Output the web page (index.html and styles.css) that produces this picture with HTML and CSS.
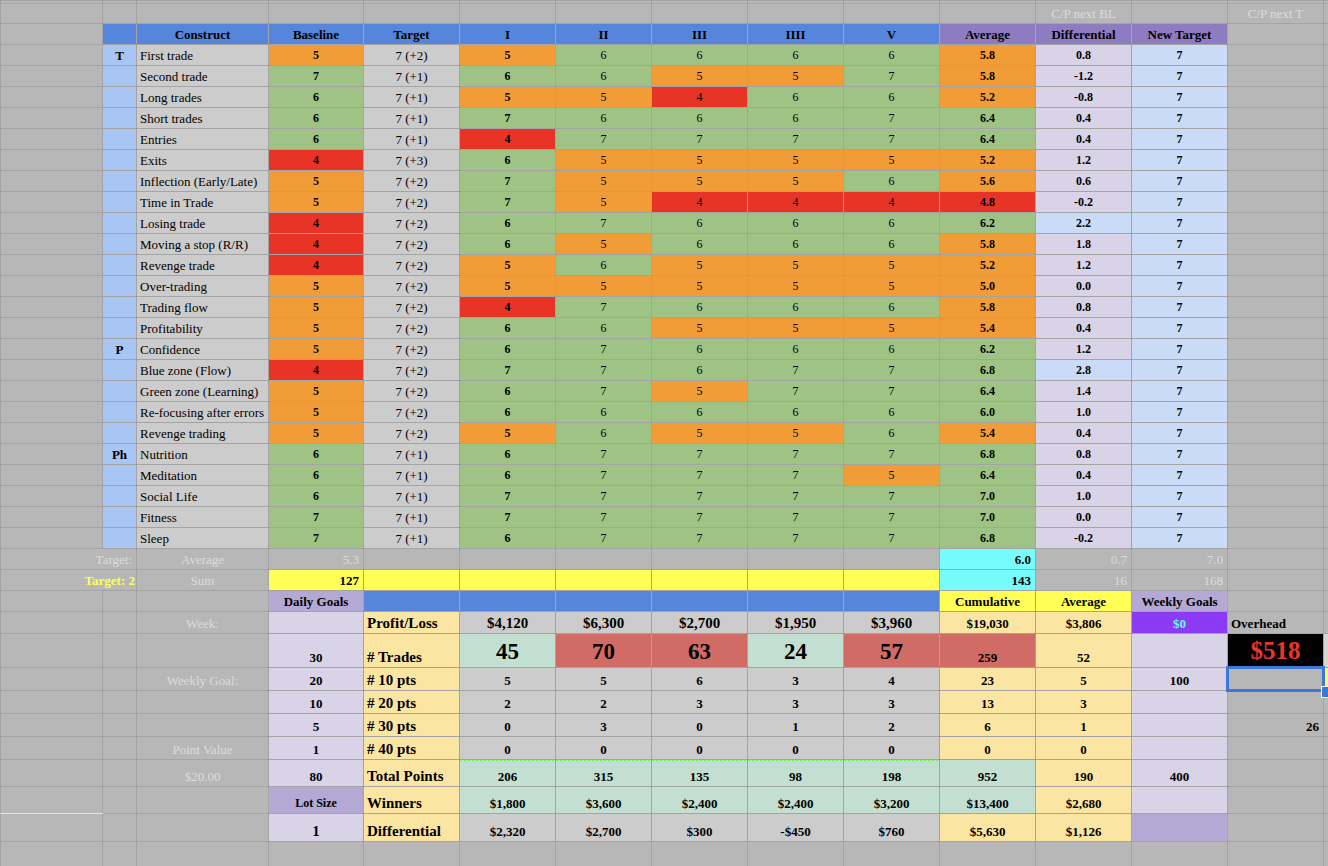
FILE: index.html
```html
<!DOCTYPE html>
<html>
<head>
<meta charset="utf-8">
<title>Trading Sheet</title>
<link rel="stylesheet" href="styles.css">
</head>
<body>
<table class="sheet">
<colgroup>
<col class="ca"><col class="cb"><col class="cc"><col class="cd">
<col class="cn"><col class="cn"><col class="cn"><col class="cn"><col class="cn">
<col class="cn"><col class="cn"><col class="cn"><col class="cn"><col class="cn">
<col class="co">
</colgroup>
<tbody>
<tr class="h23 top"><td></td><td></td><td></td><td></td><td></td><td></td><td></td><td></td><td></td><td></td><td></td><td class="dim">C/P next BL</td><td></td><td class="dim">C/P next T</td><td></td></tr>
<tr class="h21 hd"><td></td><td class="bl"></td><td class="bl b">Construct</td><td class="bl b">Baseline</td><td class="bl b">Target</td><td class="bl b">I</td><td class="bl b">II</td><td class="bl b">III</td><td class="bl b">IIII</td><td class="bl b">V</td><td class="pu b">Average</td><td class="pu b">Differential</td><td class="pu b">New Target</td><td></td><td></td></tr>

<tr class="h21"><td></td><td class="lb tag">T</td><td class="lg nm">First trade</td><td class="or b">5</td><td class="lg tg">7 (+2)</td><td class="or b">5</td><td class="gr">6</td><td class="gr">6</td><td class="gr">6</td><td class="gr">6</td><td class="or b">5.8</td><td class="lv b">0.8</td><td class="nt b">7</td><td></td><td></td></tr>
<tr class="h21"><td></td><td class="lb"></td><td class="lg nm">Second trade</td><td class="gr b">7</td><td class="lg tg">7 (+1)</td><td class="gr b">6</td><td class="gr">6</td><td class="or">5</td><td class="or">5</td><td class="gr">7</td><td class="or b">5.8</td><td class="lv b">-1.2</td><td class="nt b">7</td><td></td><td></td></tr>
<tr class="h21"><td></td><td class="lb"></td><td class="lg nm">Long trades</td><td class="gr b">6</td><td class="lg tg">7 (+1)</td><td class="or b">5</td><td class="or">5</td><td class="rd">4</td><td class="gr">6</td><td class="gr">6</td><td class="or b">5.2</td><td class="lv b">-0.8</td><td class="nt b">7</td><td></td><td></td></tr>
<tr class="h21"><td></td><td class="lb"></td><td class="lg nm">Short trades</td><td class="gr b">6</td><td class="lg tg">7 (+1)</td><td class="gr b">7</td><td class="gr">6</td><td class="gr">6</td><td class="gr">6</td><td class="gr">7</td><td class="gr b">6.4</td><td class="lv b">0.4</td><td class="nt b">7</td><td></td><td></td></tr>
<tr class="h21"><td></td><td class="lb"></td><td class="lg nm">Entries</td><td class="gr b">6</td><td class="lg tg">7 (+1)</td><td class="rd b">4</td><td class="gr">7</td><td class="gr">7</td><td class="gr">7</td><td class="gr">7</td><td class="gr b">6.4</td><td class="lv b">0.4</td><td class="nt b">7</td><td></td><td></td></tr>
<tr class="h21"><td></td><td class="lb"></td><td class="lg nm">Exits</td><td class="rd b">4</td><td class="lg tg">7 (+3)</td><td class="gr b">6</td><td class="or">5</td><td class="or">5</td><td class="or">5</td><td class="or">5</td><td class="or b">5.2</td><td class="lv b">1.2</td><td class="nt b">7</td><td></td><td></td></tr>
<tr class="h21"><td></td><td class="lb"></td><td class="lg nm">Inflection (Early/Late)</td><td class="or b">5</td><td class="lg tg">7 (+2)</td><td class="gr b">7</td><td class="or">5</td><td class="or">5</td><td class="or">5</td><td class="gr">6</td><td class="or b">5.6</td><td class="lv b">0.6</td><td class="nt b">7</td><td></td><td></td></tr>
<tr class="h21"><td></td><td class="lb"></td><td class="lg nm">Time in Trade</td><td class="or b">5</td><td class="lg tg">7 (+2)</td><td class="gr b">7</td><td class="or">5</td><td class="rd">4</td><td class="rd">4</td><td class="rd">4</td><td class="rd b">4.8</td><td class="lv b">-0.2</td><td class="nt b">7</td><td></td><td></td></tr>
<tr class="h21"><td></td><td class="lb"></td><td class="lg nm">Losing trade</td><td class="rd b">4</td><td class="lg tg">7 (+2)</td><td class="gr b">6</td><td class="gr">7</td><td class="gr">6</td><td class="gr">6</td><td class="gr">6</td><td class="gr b">6.2</td><td class="nt b">2.2</td><td class="nt b">7</td><td></td><td></td></tr>
<tr class="h21"><td></td><td class="lb"></td><td class="lg nm">Moving a stop (R/R)</td><td class="rd b">4</td><td class="lg tg">7 (+2)</td><td class="gr b">6</td><td class="or">5</td><td class="gr">6</td><td class="gr">6</td><td class="gr">6</td><td class="or b">5.8</td><td class="lv b">1.8</td><td class="nt b">7</td><td></td><td></td></tr>
<tr class="h21"><td></td><td class="lb"></td><td class="lg nm">Revenge trade</td><td class="rd b">4</td><td class="lg tg">7 (+2)</td><td class="or b">5</td><td class="gr">6</td><td class="or">5</td><td class="or">5</td><td class="or">5</td><td class="or b">5.2</td><td class="lv b">1.2</td><td class="nt b">7</td><td></td><td></td></tr>
<tr class="h21"><td></td><td class="lb"></td><td class="lg nm">Over-trading</td><td class="or b">5</td><td class="lg tg">7 (+2)</td><td class="or b">5</td><td class="or">5</td><td class="or">5</td><td class="or">5</td><td class="or">5</td><td class="or b">5.0</td><td class="lv b">0.0</td><td class="nt b">7</td><td></td><td></td></tr>
<tr class="h21"><td></td><td class="lb"></td><td class="lg nm">Trading flow</td><td class="or b">5</td><td class="lg tg">7 (+2)</td><td class="rd b">4</td><td class="gr">7</td><td class="gr">6</td><td class="gr">6</td><td class="gr">6</td><td class="or b">5.8</td><td class="lv b">0.8</td><td class="nt b">7</td><td></td><td></td></tr>
<tr class="h21"><td></td><td class="lb"></td><td class="lg nm">Profitability</td><td class="or b">5</td><td class="lg tg">7 (+2)</td><td class="gr b">6</td><td class="gr">6</td><td class="or">5</td><td class="or">5</td><td class="or">5</td><td class="or b">5.4</td><td class="lv b">0.4</td><td class="nt b">7</td><td></td><td></td></tr>
<tr class="h21"><td></td><td class="lb tag">P</td><td class="lg nm">Confidence</td><td class="or b">5</td><td class="lg tg">7 (+2)</td><td class="gr b">6</td><td class="gr">7</td><td class="gr">6</td><td class="gr">6</td><td class="gr">6</td><td class="gr b">6.2</td><td class="lv b">1.2</td><td class="nt b">7</td><td></td><td></td></tr>
<tr class="h21"><td></td><td class="lb"></td><td class="lg nm">Blue zone (Flow)</td><td class="rd b">4</td><td class="lg tg">7 (+2)</td><td class="gr b">7</td><td class="gr">7</td><td class="gr">6</td><td class="gr">7</td><td class="gr">7</td><td class="gr b">6.8</td><td class="nt b">2.8</td><td class="nt b">7</td><td></td><td></td></tr>
<tr class="h21"><td></td><td class="lb"></td><td class="lg nm">Green zone (Learning)</td><td class="or b">5</td><td class="lg tg">7 (+2)</td><td class="gr b">6</td><td class="gr">7</td><td class="or">5</td><td class="gr">7</td><td class="gr">7</td><td class="gr b">6.4</td><td class="lv b">1.4</td><td class="nt b">7</td><td></td><td></td></tr>
<tr class="h21"><td></td><td class="lb"></td><td class="lg nm">Re-focusing after errors</td><td class="or b">5</td><td class="lg tg">7 (+2)</td><td class="gr b">6</td><td class="gr">6</td><td class="gr">6</td><td class="gr">6</td><td class="gr">6</td><td class="gr b">6.0</td><td class="lv b">1.0</td><td class="nt b">7</td><td></td><td></td></tr>
<tr class="h21"><td></td><td class="lb"></td><td class="lg nm">Revenge trading</td><td class="or b">5</td><td class="lg tg">7 (+2)</td><td class="or b">5</td><td class="gr">6</td><td class="or">5</td><td class="or">5</td><td class="gr">6</td><td class="or b">5.4</td><td class="lv b">0.4</td><td class="nt b">7</td><td></td><td></td></tr>
<tr class="h21"><td></td><td class="lb tag">Ph</td><td class="lg nm">Nutrition</td><td class="gr b">6</td><td class="lg tg">7 (+1)</td><td class="gr b">6</td><td class="gr">7</td><td class="gr">7</td><td class="gr">7</td><td class="gr">7</td><td class="gr b">6.8</td><td class="lv b">0.8</td><td class="nt b">7</td><td></td><td></td></tr>
<tr class="h21"><td></td><td class="lb"></td><td class="lg nm">Meditation</td><td class="gr b">6</td><td class="lg tg">7 (+1)</td><td class="gr b">6</td><td class="gr">7</td><td class="gr">7</td><td class="gr">7</td><td class="or">5</td><td class="gr b">6.4</td><td class="lv b">0.4</td><td class="nt b">7</td><td></td><td></td></tr>
<tr class="h21"><td></td><td class="lb"></td><td class="lg nm">Social Life</td><td class="gr b">6</td><td class="lg tg">7 (+1)</td><td class="gr b">7</td><td class="gr">7</td><td class="gr">7</td><td class="gr">7</td><td class="gr">7</td><td class="gr b">7.0</td><td class="lv b">1.0</td><td class="nt b">7</td><td></td><td></td></tr>
<tr class="h21"><td></td><td class="lb"></td><td class="lg nm">Fitness</td><td class="gr b">7</td><td class="lg tg">7 (+1)</td><td class="gr b">7</td><td class="gr">7</td><td class="gr">7</td><td class="gr">7</td><td class="gr">7</td><td class="gr b">7.0</td><td class="lv b">0.0</td><td class="nt b">7</td><td></td><td></td></tr>
<tr class="h21"><td></td><td class="lb"></td><td class="lg nm">Sleep</td><td class="gr b">7</td><td class="lg tg">7 (+1)</td><td class="gr b">6</td><td class="gr">7</td><td class="gr">7</td><td class="gr">7</td><td class="gr">7</td><td class="gr b">6.8</td><td class="lv b">-0.2</td><td class="nt b">7</td><td></td><td></td></tr>

<tr class="h21 t13"><td colspan="2" class="dim r">Target:</td><td class="dim">Average</td><td class="dim r">5.3</td><td></td><td></td><td></td><td></td><td></td><td></td><td class="cy b r">6.0</td><td class="dim r">0.7</td><td class="dim r">7.0</td><td></td><td></td></tr>
<tr class="h21 t13"><td colspan="2" class="yt r">Target: 2</td><td class="dim">Sum</td><td class="ye b r">127</td><td class="ye"></td><td class="ye"></td><td class="ye"></td><td class="ye"></td><td class="ye"></td><td class="ye"></td><td class="cy b r">143</td><td class="dim r">16</td><td class="dim r">168</td><td></td><td></td></tr>
<tr class="h21 t13"><td></td><td></td><td></td><td class="ld b">Daily Goals</td><td class="bl"></td><td class="bl"></td><td class="bl"></td><td class="bl"></td><td class="bl"></td><td class="bl"></td><td class="ye b">Cumulative</td><td class="ye b">Average</td><td class="ld b">Weekly Goals</td><td></td><td></td></tr>

<tr class="h22 t13"><td></td><td></td><td class="dim">Week:</td><td class="lv"></td><td class="ly lab">Profit/Loss</td><td class="lg b f15">$4,120</td><td class="lg b f15">$6,300</td><td class="lg b f15">$2,700</td><td class="lg b f15">$1,950</td><td class="lg b f15">$3,960</td><td class="ly b">$19,030</td><td class="ly b">$3,806</td><td class="vi b cyt">$0</td><td class="b l">Overhead</td><td></td></tr>
<tr class="h34 t13"><td></td><td></td><td></td><td class="lv b">30</td><td class="ly lab"># Trades</td><td class="mi big">45</td><td class="pk big">70</td><td class="pk big">63</td><td class="mi big">24</td><td class="pk big">57</td><td class="pk b">259</td><td class="ly b">52</td><td class="lv"></td><td class="bk money">$518</td><td class="pale"></td></tr>
<tr class="h23 t13"><td></td><td></td><td class="dim">Weekly Goal:</td><td class="lv b">20</td><td class="ly lab"># 10 pts</td><td class="lg b">5</td><td class="lg b">5</td><td class="lg b">6</td><td class="lg b">3</td><td class="lg b">4</td><td class="ly b">23</td><td class="ly b">5</td><td class="lv b">100</td><td class="sel"><span class="selbox"></span><span class="handle"></span></td><td class="ye"></td></tr>
<tr class="h23 t13"><td></td><td></td><td></td><td class="lv b">10</td><td class="ly lab"># 20 pts</td><td class="lg b">2</td><td class="lg b">2</td><td class="lg b">3</td><td class="lg b">3</td><td class="lg b">3</td><td class="ly b">13</td><td class="ly b">3</td><td class="lv"></td><td></td><td></td></tr>
<tr class="h23 t13"><td></td><td></td><td></td><td class="lv b">5</td><td class="ly lab"># 30 pts</td><td class="lg b">0</td><td class="lg b">3</td><td class="lg b">0</td><td class="lg b">1</td><td class="lg b">2</td><td class="ly b">6</td><td class="ly b">1</td><td class="lv"></td><td class="b r">26</td><td></td></tr>
<tr class="h23 t13"><td></td><td></td><td class="dim">Point Value</td><td class="lv b">1</td><td class="ly lab"># 40 pts</td><td class="lg b">0</td><td class="lg b">0</td><td class="lg b">0</td><td class="lg b">0</td><td class="lg b">0</td><td class="ly b">0</td><td class="ly b">0</td><td class="lv"></td><td></td><td></td></tr>
<tr class="h27 t13"><td></td><td></td><td class="dim">$20.00</td><td class="lv b">80</td><td class="ly lab">Total Points</td><td class="mi b dot">206</td><td class="mi b dot">315</td><td class="mi b dot">135</td><td class="mi b dot">98</td><td class="mi b dot">198</td><td class="mi b">952</td><td class="ly b">190</td><td class="lv b">400</td><td></td><td></td></tr>
<tr class="h27 t13"><td class="wl"></td><td></td><td></td><td class="ld b f12">Lot Size</td><td class="ly lab">Winners</td><td class="mi b">$1,800</td><td class="mi b">$3,600</td><td class="mi b">$2,400</td><td class="mi b">$2,400</td><td class="mi b">$3,200</td><td class="mi b">$13,400</td><td class="ly b">$2,680</td><td class="lv"></td><td></td><td></td></tr>
<tr class="h28 t13"><td></td><td></td><td></td><td class="lv b f15">1</td><td class="ly lab">Differential</td><td class="lg b">$2,320</td><td class="lg b">$2,700</td><td class="lg b">$300</td><td class="lg b">-$450</td><td class="lg b">$760</td><td class="ly b">$5,630</td><td class="ly b">$1,126</td><td class="ld"></td><td></td><td></td></tr>
<tr class="h25"><td></td><td></td><td></td><td></td><td></td><td></td><td></td><td></td><td></td><td></td><td></td><td></td><td></td><td></td><td></td></tr>
</tbody>
</table>
</body>
</html>
```

FILE: styles.css
```css
* { box-sizing: border-box; }
html, body { margin: 0; padding: 0; background: #b7b7b7; }
body {
  font-family: "Liberation Serif", "Times New Roman", serif;
  color: #000;
  width: 1328px;
  height: 866px;
  overflow: hidden;
}

.sheet {
  border-collapse: collapse;
  table-layout: fixed;
  width: 1328px;
}
.ca { width: 102px; }
.cb { width: 34px; }
.cc { width: 132px; }
.cd { width: 95px; }
.cn { width: 96px; }
.co { width: 5px; }

.sheet td {
  border: 1px solid rgba(0, 0, 0, 0.1);
  background: #b7b7b7;
  padding: 0 3px 2px;
  font-size: 12px;
  line-height: 15px;
  text-align: center;
  vertical-align: bottom;
  white-space: nowrap;
  overflow: hidden;
}
.sheet .top td { box-shadow: inset 0 2px 0 #b7b7b7, inset 0 3px 0 #a9a9a9; }

/* row heights */
.h21 { height: 21px; }
.h22 { height: 22px; }
.h23 { height: 23px; }
.h25 { height: 25px; }
.h27 { height: 27px; }
.h28 { height: 28px; }
.h34 { height: 34px; }

/* typography */
.sheet .hd td { font-size: 13px; }
.sheet .t13 td { font-size: 13px; }
.sheet td.b { font-weight: bold; }
.sheet td.nm { text-align: left; font-size: 13px; }
.sheet td.tg { font-size: 13px; }
.sheet td.tag { font-weight: bold; font-size: 13px; }
.sheet td.r { text-align: right; padding-right: 4px; }
.sheet td.l { text-align: left; }
.sheet td.dim { color: #dcdcdc; font-size: 13px; }
.sheet td.f15 { font-size: 15px; }
.sheet td.f12 { font-size: 12px; }
.sheet td.lab { text-align: left; font-weight: bold; font-size: 15px; padding-left: 3px; }
.sheet td.big { font-size: 23px; font-weight: bold; line-height: 26px; padding-bottom: 2px; }
.sheet td.money { font-size: 25px; font-weight: bold; color: #e8362a; vertical-align: bottom; line-height: 28px; padding-bottom: 2px; }
.sheet td.cyt { color: #66ffff; }
.sheet td.yt { color: #ffff55; font-weight: bold; padding-right: 1px; }

/* fills */
.sheet td.lg { background: #cccccc; }
.sheet td.bl { background: #5586dc; }
.sheet td.pu { background: #8e7cc3; }
.sheet td.lb { background: #a8c5f4; }
.sheet td.gr { background: #9ec385; }
.sheet td.or { background: #f29c37; }
.sheet td.rd { background: #e83427; }
.sheet td.lv { background: #d9d3e8; }
.sheet td.nt { background: #cadbf8; }
.sheet td.ye { background: #ffff55; }
.sheet td.cy { background: #76fcfd; }
.sheet td.ly { background: #fbe5a3; }
.sheet td.mi { background: #c2dfd1; }
.sheet td.pk { background: #d06b66; }
.sheet td.vi { background: #8c3af3; }
.sheet td.ld { background: #b4a8d5; }
.sheet td.bk { background: #000000; }
.sheet td.pale { background: #d6d6d6; }

.sheet td.dot {
  background-color: #c2dfd1;
  background-image: repeating-linear-gradient(90deg, #66ff33 0 2px, transparent 2px 4px);
  background-size: 100% 1px;
  background-repeat: no-repeat;
  background-position: left top;
}

.sheet td.wl { border-bottom: 1px solid #e4e4e4; }

/* active cell selection */
.sheet td.sel { position: relative; overflow: visible; }
.selbox {
  position: absolute;
  left: -2px;
  top: -2px;
  right: -2px;
  bottom: -2px;
  border: 3px solid #3b78d9;
}
.handle {
  position: absolute;
  right: -10px;
  bottom: -8px;
  width: 12px;
  height: 12px;
  background: #3b78d9;
  border: 1px solid #ffffff;
  z-index: 2;
}
```
